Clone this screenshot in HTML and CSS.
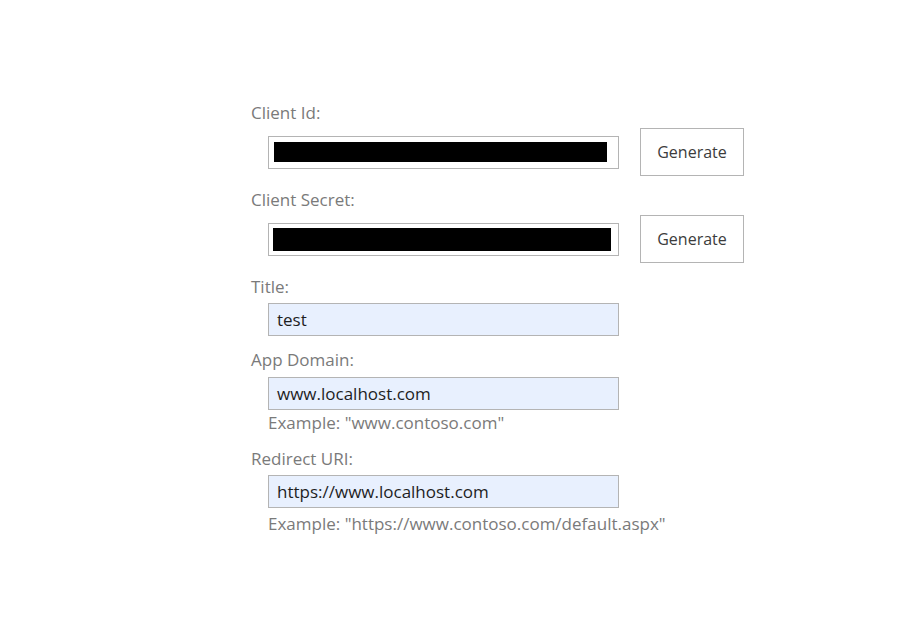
FILE: index.html
```html
<!DOCTYPE html>
<html lang="en">
<head>
<meta charset="utf-8">
<title>App registration</title>
<link rel="stylesheet" href="styles.css">
</head>
<body>
  <form class="form">
    <div class="label">Client Id:</div>
    <div class="row">
      <div class="input masked"><span class="redact redact-id"></span></div>
      <button type="button" class="btn">Generate</button>
    </div>

    <div class="label">Client Secret:</div>
    <div class="row">
      <div class="input masked"><span class="redact redact-secret"></span></div>
      <button type="button" class="btn">Generate</button>
    </div>

    <div class="label">Title:</div>
    <div class="field">
      <div class="input filled">test</div>
    </div>

    <div class="label label-app">App Domain:</div>
    <div class="field field-app">
      <div class="input filled">www.localhost.com</div>
      <div class="hint">Example: "www.contoso.com"</div>
    </div>

    <div class="label label-redirect">Redirect URI:</div>
    <div class="field">
      <div class="input filled">https://www.localhost.com</div>
      <div class="hint hint-last">Example: "https://www.contoso.com/default.aspx"</div>
    </div>
  </form>
</body>
</html>
```

FILE: styles.css
```css
html, body {
  margin: 0;
  padding: 0;
  background: #ffffff;
}

body {
  font-family: "Open Sans", "Noto Sans", sans-serif;
  color: #222222;
}

.form {
  padding: 101px 0 0 251px;
}

.label {
  font-size: 17px;
  line-height: 23px;
  color: #7a7a7a;
}

.row {
  display: flex;
  align-items: center;
  gap: 21px;
  margin: 4px 0 12px 17px;
}

.field {
  margin: 5px 0 0 17px;
}

.field + .label {
  margin-top: 12px;
}

.field-app + .label {
  margin-top: 13px;
}

.label-app + .field {
  margin-top: 6px;
}

.input {
  box-sizing: border-box;
  width: 351px;
  height: 33px;
  border: 1px solid #b4b4b4;
  background: #ffffff;
  display: flex;
  align-items: center;
  padding: 0 8px;
  font-size: 17px;
  line-height: 23px;
  color: #1e1e1e;
  white-space: nowrap;
}

.input.filled {
  background: #e8f0fe;
}

.input.masked {
  padding: 0 4px;
}

.redact {
  display: block;
  background: #000000;
}

.redact-id {
  width: 333px;
  height: 20px;
  margin-left: 1px;
}

.redact-secret {
  width: 338px;
  height: 23px;
  margin-top: 1px;
}

.btn {
  box-sizing: border-box;
  width: 104px;
  height: 48px;
  border: 1px solid #b4b4b4;
  background: #ffffff;
  font-family: "Open Sans", "Noto Sans", sans-serif;
  font-size: 16px;
  color: #3c3c3c;
  padding: 0;
  margin: 0;
}

.hint {
  font-size: 17px;
  line-height: 23px;
  color: #7a7a7a;
  margin-top: 1px;
}

.hint-last {
  margin-top: 4px;
}
```
